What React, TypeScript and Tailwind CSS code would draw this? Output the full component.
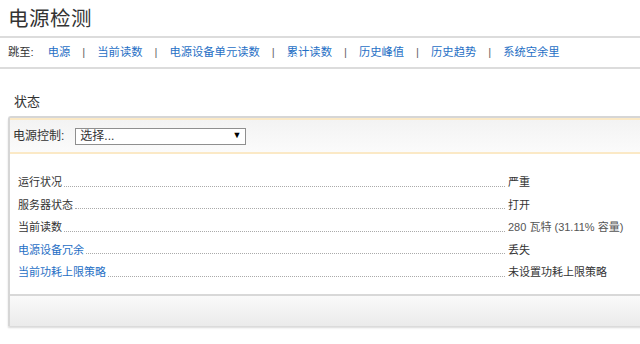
const font = { fontFamily: '"Liberation Sans", "Noto Sans CJK SC", sans-serif' };

const links = ["电源", "当前读数", "电源设备单元读数", "累计读数", "历史峰值", "历史趋势", "系统空余里"];

const rows = [
  { label: "运行状况", value: "严重", link: false, muted: false },
  { label: "服务器状态", value: "打开", link: false, muted: false },
  { label: "当前读数", value: "280 瓦特 (31.11% 容量)", link: false, muted: true },
  { label: "电源设备冗余", value: "丢失", link: true, muted: false },
  { label: "当前功耗上限策略", value: "未设置功耗上限策略", link: true, muted: false },
];

export default function App() {
  return (
    <div className="w-[640px] h-[344px] overflow-hidden bg-white text-[#333]" style={font}>
      <div className="h-[38px] border-b-2 border-[#dcdcdc] px-2 pt-[6px]">
        <h1 className="text-[20.5px] leading-[26px] tracking-[0.5px]">电源检测</h1>
      </div>

      <div className="flex h-[31px] items-center border-b-2 border-[#dcdcdc] px-2 text-[11.3px]">
        <span className="mr-[14px]">跳至:</span>
        {links.map((l, i) => (
          <div key={l} className="flex items-center">
            {i > 0 && <span className="mx-[12px] text-[#666]">|</span>}
            <a className="text-[#1f6fc5]">{l}</a>
          </div>
        ))}
      </div>

      <div className="px-[14px] pt-[24px] text-[13px] leading-[18px]">状态</div>

      <div className="ml-2 mt-[5px] w-[680px] rounded-tl-[3px] border-l-2 border-t-2 border-[#d6d6d6] shadow-[0_2px_2px_rgba(0,0,0,0.15)]">
        <div className="flex h-[36px] items-center border-y-2 border-[#fbe9c6] bg-gradient-to-b from-[#f3f3f3] to-[#fbfbfb] px-[3px] text-[12px]">
          <span>电源控制:</span>
          <div className="ml-[11px] flex h-[17px] w-[171px] items-center justify-between border border-[#8f8f8f] bg-white pl-[4px] pr-[4px] text-[12px]">
            <span>选择...</span>
            <span className="text-[9px] text-black">▼</span>
          </div>
        </div>

        <div className="px-[8px] pt-[17px] pb-[10px] text-[11px]">
          {rows.map((r) => (
            <div key={r.label} className="flex h-[22.5px] items-center">
              <span className={r.link ? "text-[#1f6fc5]" : "text-[#333]"}>{r.label}</span>
              <div className="ml-[2px] mt-[8px] w-0 flex-1 border-b border-dotted border-[#aaa]" />
              <div className="ml-[3px] w-[172px]">
                <span className={r.muted ? "text-[#555]" : "text-[#333]"}>{r.value}</span>
              </div>
            </div>
          ))}
        </div>

        <div className="h-[32px] border-t-2 border-[#d8d8d8] bg-gradient-to-b from-[#fafafa] to-[#ebebeb]" />
      </div>
    </div>
  );
}
